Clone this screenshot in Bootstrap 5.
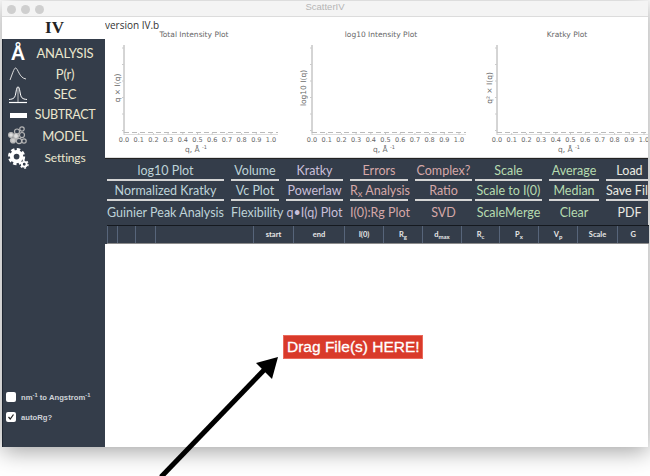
<!DOCTYPE html>
<html lang="en">
<head>
  <meta charset="UTF-8">
  <meta name="viewport" content="width=device-width, initial-scale=1.0">
  <title>ScatterIV</title>
  <link href="https://cdn.jsdelivr.net/npm/bootstrap@5.3.2/dist/css/bootstrap.min.css" rel="stylesheet">
  <script src="https://cdn.jsdelivr.net/npm/bootstrap@5.3.2/dist/js/bootstrap.bundle.min.js"></script>
  <style>
    html, body { height: 100%; overflow: hidden; background: #fff; }
    .app-window { width: 646px; height: 446px; margin: 1px 0 0 2px; background: #fff; box-shadow: 0 4px 22px rgba(0,0,0,.38); }
    .title-bar { height: 16px; background: #f4f4f4; border-bottom: 1px solid #dcdcdc; font: 9.5px "Liberation Sans", sans-serif; color: #b5b5b5; }
    .traffic { width: 9px; height: 9px; border-radius: 50%; background: #cfcfcf; }
    .traffic-row { left: 5px; top: 4px; gap: 5px; }
    .side-col { width: 103px; flex: none; }
    .logo-box { height: 22px; font: bold 17px/22px "Liberation Serif", serif; color: #222; text-align: center; padding-left: 2px; }
    .side-panel { background: #343d4a; font-family: Lato, sans-serif; color: #ebe7cf; border-left: 1px solid #1d2530; padding-bottom: 20px; }
    .side-item { height: 20.6px; }
    .side-item.last-item { margin-top: 2px; }
    .side-icon { width: 22px; flex: none; display: flex; justify-content: center; }
    .side-label { flex: 1; text-align: center; font-size: 13px; letter-spacing: -.2px; line-height: 20px; white-space: nowrap; padding-right: 4px; }
    .side-label.small-label { font-size: 12px; }
    .side-label.tight { font-size: 12.5px; letter-spacing: -.3px; }
    .aang { font: bold 20px/20px "Liberation Sans", sans-serif; color: #fff; }
    .side-check { font: bold 7.7px "Liberation Sans", sans-serif; color: #cfd3d8; gap: 5px; height: 20px; padding-left: 3px; }
    .side-check .form-check-input { width: 10px; height: 10px; margin: 0; border-radius: 2px; border: 0; background-color: #fff; flex: none; }
    .side-check .form-check-input:checked { background-color: #fff; background-image: url("data:image/svg+xml,%3csvg xmlns='http://www.w3.org/2000/svg' viewBox='0 0 20 20'%3e%3cpath fill='none' stroke='%23222' stroke-width='2.5' d='m5 10 3.5 4L15 5'/%3e%3c/svg%3e"); }
    .main-col { min-width: 0; }
    .plots-area { height: 141px; background: #fff; border-bottom: 1px solid #ddd; overflow: hidden; }
    .version-line { font: 10px/11px "Open Sans", sans-serif; color: #333; height: 11px; padding-top: 3px; }
    .plot-svg { display: block; flex: none; opacity: .99; }
    .plot-svg text { font-family: "DejaVu Sans", sans-serif; fill: #666; }
    .cmd-area { background: #343d4a; height: 67px; font-family: Lato, sans-serif; padding: 3px 0 0 2px; border-top: 1px solid #222; }
    .cmd-grid { display: grid; grid-template-columns: 117px 48px 57px 58px 57px 63px 50px 47px; column-gap: 7px; grid-template-rows: 20px 20px 20px; }
    .cmd-btn { background: none; border: 0; padding: 0; line-height: 18px; font-size: 12.5px; white-space: nowrap; text-align: center; border-radius: 0; }
    .cmd-btn.ruled { border-bottom: 2px solid #d5d5d5; height: 19px; }
    .cmd-btn:not(.ruled) { padding-top: 2px; }
    .cmd-btn.pull-left { margin-left: -4px; }
    .c-blue, .c-blue:hover { color: #bed3d8; }
    .c-lav, .c-lav:hover { color: #c9bfd9; }
    .c-rose, .c-rose:hover { color: #d6a8a8; }
    .c-green, .c-green:hover { color: #b6dbb0; }
    .c-white, .c-white:hover { color: #ebebe3; }
    .grid-wrap { background: #343d4a; }
    .data-head { table-layout: fixed; width: 541px; margin: 0 0 0 2px; --bs-table-bg: #343d4a; --bs-table-color: #e8e8e8; }
    .data-head th { height: 18px; padding: 0; font: bold 7.5px/17px Lato, sans-serif; text-align: center; border: 0; border-left: 1px solid #57657a; border-top: 1px solid #15191f; border-bottom: 1px solid #8c8c8c; }
    .data-head sub { font-size: 6px; }
    .drop-area { background: #fff; padding: 90px 0 0 178px; }
    .drop-badge { display: inline-block; background: #d93a2a; color: #fff; border: 1px solid #ea6a5c; font: 15.5px/22px "Liberation Sans", sans-serif; padding: 0 0 0 3px; height: 24px; width: 140px; white-space: nowrap; -webkit-text-stroke: .3px #fff; }
    .big-arrow { left: 0; top: 0; pointer-events: none; }
  </style>
</head>
<body>
  <div class="app-window d-flex flex-column">
    <div class="title-bar position-relative text-center">
      <div class="traffic-row position-absolute d-flex"><span class="traffic"></span><span class="traffic"></span><span class="traffic"></span></div>
      ScatterIV
    </div>
    <div class="d-flex flex-grow-1">
      <div class="side-col d-flex flex-column">
        <div class="logo-box">IV</div>
        <div class="side-panel flex-grow-1 d-flex flex-column pt-1">
          <div class="side-item d-flex align-items-center ps-1">
            <div class="side-icon aang">Å</div><div class="side-label">ANALYSIS</div>
          </div>
          <div class="side-item d-flex align-items-center ps-1">
            <div class="side-icon"><svg width="18" height="15" viewBox="0 0 18 15"><path d="M1 14C3 9 5 2 6.500 2 9 2 10 12 17 13" fill="none" stroke="#ddd" stroke-width="1"/></svg></div><div class="side-label">P(r)</div>
          </div>
          <div class="side-item d-flex align-items-center ps-1">
            <div class="side-icon"><svg width="20" height="20" viewBox="0 0 20 20"><path d="M1 15.500C6 15 7 14 8 8 9 1 11 1 12 8 13 14 14 15 19 15.500" fill="none" stroke="#fff" stroke-width="1"/><path d="M1 18.500H19" stroke="#fff" stroke-width="1.200"/><path d="M10 4V18" stroke="#ddd" stroke-width=".8"/></svg></div><div class="side-label">SEC</div>
          </div>
          <div class="side-item d-flex align-items-center ps-1">
            <div class="side-icon"><svg width="17" height="5" viewBox="0 0 17 5"><rect width="17" height="5" fill="#fff"/></svg></div><div class="side-label tight">SUBTRACT</div>
          </div>
          <div class="side-item d-flex align-items-center ps-1">
            <div class="side-icon"><svg width="20" height="20" viewBox="0 0 20 20" fill="none" stroke="#b5b5b5" stroke-width="1.200"><circle cx="14" cy="3" r="2.200"/><circle cx="9" cy="5.500" r="2.500"/><circle cx="3" cy="9" r="2.400" fill="#ddd"/><circle cx="8" cy="10" r="2.500" fill="#ddd"/><circle cx="14" cy="9" r="2.500"/><circle cx="5" cy="14.500" r="2.500" fill="#ccc"/><circle cx="11" cy="15" r="2.700"/><circle cx="16" cy="15" r="2.200"/></svg></div><div class="side-label">MODEL</div>
          </div>
          <div class="side-item last-item d-flex align-items-center ps-1">
            <div class="side-icon"><svg width="21" height="21" viewBox="0 0 22 22" fill="none" stroke="#fff"><circle cx="9" cy="9" r="5" stroke-width="4"/><circle cx="9" cy="9" r="7.500" stroke-width="3" stroke-dasharray="3.500 2.390"/><circle cx="17" cy="17" r="2.500" stroke-width="2"/><circle cx="17" cy="17" r="4" stroke-width="1.500" stroke-dasharray="2 2.190"/></svg></div><div class="side-label small-label">Settings</div>
          </div>
          <div class="mt-auto">
            <label class="side-check d-flex align-items-center"><input class="form-check-input" type="checkbox"><span>nm<sup>-1</sup> to Angstrom<sup>-1</sup></span></label>
            <label class="side-check d-flex align-items-center"><input class="form-check-input" type="checkbox" checked><span>autoRg?</span></label>
          </div>
        </div>
      </div>
      <div class="main-col flex-grow-1 d-flex flex-column">
        <div class="plots-area">
          <div class="version-line">version IV.b</div>
          <div class="d-flex" id="plots"></div>
        </div>
        <div class="cmd-area overflow-hidden">
          <div class="cmd-grid">
            <button class="btn cmd-btn ruled c-blue">log10 Plot</button>
            <button class="btn cmd-btn ruled c-blue">Volume</button>
            <button class="btn cmd-btn ruled c-lav">Kratky</button>
            <button class="btn cmd-btn ruled c-rose">Errors</button>
            <button class="btn cmd-btn ruled c-rose">Complex?</button>
            <button class="btn cmd-btn ruled pull-left c-green">Scale</button>
            <button class="btn cmd-btn ruled c-green">Average</button>
            <button class="btn cmd-btn ruled c-white">Load</button>
            <button class="btn cmd-btn ruled c-blue">Normalized Kratky</button>
            <button class="btn cmd-btn ruled c-blue">Vc Plot</button>
            <button class="btn cmd-btn ruled c-lav">Powerlaw</button>
            <button class="btn cmd-btn ruled c-rose">R<sub>x</sub> Analysis</button>
            <button class="btn cmd-btn ruled c-rose">Ratio</button>
            <button class="btn cmd-btn ruled pull-left c-green">Scale to I(0)</button>
            <button class="btn cmd-btn ruled c-green">Median</button>
            <button class="btn cmd-btn ruled c-white">Save File</button>
            <button class="btn cmd-btn c-blue">Guinier Peak Analysis</button>
            <button class="btn cmd-btn c-blue">Flexibility</button>
            <button class="btn cmd-btn c-lav">q•I(q) Plot</button>
            <button class="btn cmd-btn c-rose">I(0):Rg Plot</button>
            <button class="btn cmd-btn c-rose">SVD</button>
            <button class="btn cmd-btn pull-left c-green">ScaleMerge</button>
            <button class="btn cmd-btn c-green">Clear</button>
            <button class="btn cmd-btn c-white">PDF</button>
          </div>
        </div>
        <div class="grid-wrap">
          <table class="table data-head">
            <colgroup id="headCols"></colgroup>
            <thead><tr id="headRow"></tr></thead>
          </table>
        </div>
        <div class="drop-area flex-grow-1">
          <span class="drop-badge">Drag File(s) HERE!</span>
        </div>
      </div>
    </div>
  </div>

  <svg class="big-arrow position-absolute" width="650" height="476" viewBox="0 0 650 476">
    <path d="M161 477 266 368" stroke="#000" stroke-width="5" fill="none"/>
    <path d="M278 357 256 363 272 379Z" fill="#000"/>
  </svg>

  <script>
    const plots = [
      { title: 'Total Intensity Plot', ylabel: 'q × I(q)', width: 188, axis: 19, ylab: 12, cx: 89 },
      { title: 'log10 Intensity Plot', ylabel: 'log10 I(q)', width: 185, axis: 19, ylab: 10, cx: 88 },
      { title: 'Kratky Plot', ylabel: 'q² × I(q)', width: 170, axis: 19, ylab: 11, cx: 89 }
    ];
    const plotSvg = (p) => {
      let ticks = '';
      for (let i = 0; i <= 10; i++) {
        const x = p.axis + i * 14.7;
        ticks += `<text x="${x}" y="113.5" font-size="6.5" text-anchor="middle">${(i / 10).toFixed(1)}</text>`;
        ticks += `<path d="M${x} 105v2" stroke="#ccc"/>`;
      }
      for (let j = 0; j < 6; j++) {
        ticks += `<path d="M${p.axis - 2} ${20 + j * 16.5}h2" stroke="#ccc"/>`;
      }
      return `<svg class="plot-svg" width="${p.width}" height="128" viewBox="0 0 ${p.width} 128">
        <text x="${p.cx}" y="9" font-size="7.500" text-anchor="middle">${p.title}</text>
        <text transform="translate(${p.ylab + 3} 60) rotate(-90)" font-size="7.500" text-anchor="middle">${p.ylabel}</text>
        <path d="M${p.axis} 17V105" stroke="#aaa" stroke-width="1"/>
        <path d="M${p.axis} 104.500H${p.axis + 154}" stroke="#bbb" stroke-dasharray="5 3"/>
        <path d="M${p.axis} 106.500H${p.axis + 154}" stroke="#ddd"/>
        ${ticks}
        <text x="${p.axis + 72}" y="124" font-size="7.500" text-anchor="middle">q, Å <tspan font-size="5" dy="-3">-1</tspan></text>
      </svg>`;
    };
    document.getElementById('plots').innerHTML = plots.map(plotSvg).join('');

    const cols = [
      ['', 10], ['', 18], ['', 20], ['', 98], ['start', 40], ['end', 51], ['I(0)', 39],
      ['R<sub>g</sub>', 39], ['d<sub>max</sub>', 39], ['R<sub>c</sub>', 38], ['P<sub>x</sub>', 39],
      ['V<sub>p</sub>', 39], ['Scale', 40], ['G', 31]
    ];
    document.getElementById('headCols').innerHTML = cols.map(c => `<col span="1" style="width:${c[1]}px">`).join('');
    document.getElementById('headRow').innerHTML = cols.map(c => `<th>${c[0]}</th>`).join('');
  </script>
</body>
</html>
